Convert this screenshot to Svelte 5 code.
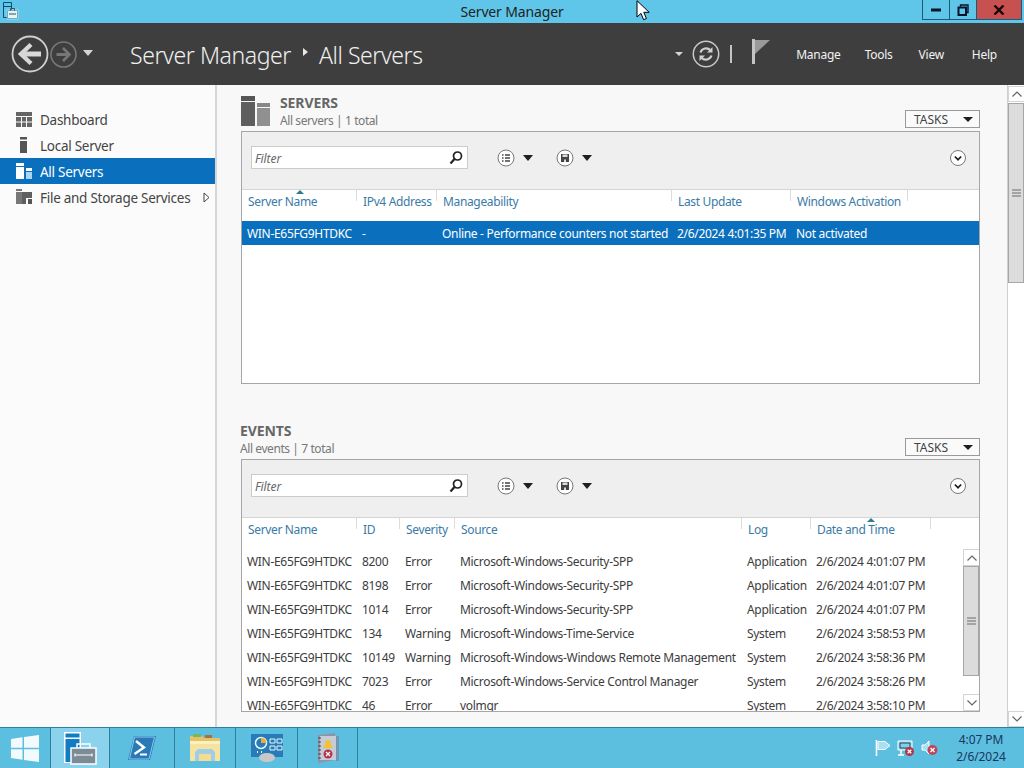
<script>
  const serverCols = [
    { label: 'Server Name', w: 114, sort: 54 },
    { label: 'IPv4 Address', w: 80 },
    { label: 'Manageability', w: 235 },
    { label: 'Last Update', w: 119 },
    { label: 'Windows Activation', w: 117 },
    { label: '', w: 72 }
  ];
  const serverRow = ['WIN-E65FG9HTDKC', '-', 'Online - Performance counters not started', '2/6/2024 4:01:35 PM', 'Not activated', ''];
  const eventCols = [
    { label: 'Server Name', w: 114 },
    { label: 'ID', w: 43 },
    { label: 'Severity', w: 55 },
    { label: 'Source', w: 287 },
    { label: 'Log', w: 69 },
    { label: 'Date and Time', w: 120, sort: 57 },
    { label: '', w: 49 }
  ];
  const events = [
    ['8200', 'Error', 'Microsoft-Windows-Security-SPP', 'Application', '2/6/2024 4:01:07 PM'],
    ['8198', 'Error', 'Microsoft-Windows-Security-SPP', 'Application', '2/6/2024 4:01:07 PM'],
    ['1014', 'Error', 'Microsoft-Windows-Security-SPP', 'Application', '2/6/2024 4:01:07 PM'],
    ['134', 'Warning', 'Microsoft-Windows-Time-Service', 'System', '2/6/2024 3:58:53 PM'],
    ['10149', 'Warning', 'Microsoft-Windows-Windows Remote Management', 'System', '2/6/2024 3:58:36 PM'],
    ['7023', 'Error', 'Microsoft-Windows-Service Control Manager', 'System', '2/6/2024 3:58:26 PM'],
    ['46', 'Error', 'volmgr', 'System', '2/6/2024 3:58:10 PM']
  ];
  const tmpl = (cols) => cols.map((c) => c.w + 'px').join(' ');
</script>

{#snippet headRow(cols)}
  <div class="thead" style="grid-template-columns:{tmpl(cols)}">
    {#each cols as c}
      <div class="th">
        {#if c.sort}<i class="sort" style="left:{c.sort}px"></i>{/if}
        {c.label}
      </div>
    {/each}
  </div>
{/snippet}

{#snippet toolbar()}
  <div class="toolbar">
    <div class="filter">
      <span>Filter</span>
      <svg width="16" height="16" viewBox="0 0 16 16"><circle cx="9.5" cy="6" r="4" fill="none" stroke="#222" stroke-width="1.7"/><path d="M6.500 9 2.500 13.500" stroke="#222" stroke-width="2.2"/></svg>
    </div>
    <div class="tool first">
      <svg width="18" height="18" viewBox="0 0 18 18"><circle cx="9" cy="9" r="8" fill="#fff" stroke="#777"/><path d="M5 6h1.500M5 9h1.500M5 12h1.500M8 6h5M8 9h5M8 12h5" stroke="#444" stroke-width="1.6"/></svg>
      <i class="tri"></i>
    </div>
    <div class="tool">
      <svg width="18" height="18" viewBox="0 0 18 18"><circle cx="9" cy="9" r="8" fill="#fff" stroke="#777"/><path d="M5 5h8v8H5z" fill="#444"/><path d="M6.500 5.500h5V8h-5z" fill="#ddd"/><path d="M8 10.500h2V13H8z" fill="#ddd"/></svg>
      <i class="tri"></i>
    </div>
    <svg class="expand" width="16" height="16" viewBox="0 0 16 16"><circle cx="8" cy="8" r="7.500" fill="#fff" stroke="#777"/><path d="M4.800 6.500 8 9.700l3.200-3.200" fill="none" stroke="#222" stroke-width="1.7"/></svg>
  </div>
{/snippet}

{#snippet tasks()}
  <div class="tasks"><span>TASKS</span><i class="tri small"></i></div>
{/snippet}

{#snippet chev(up)}
  <svg width="12" height="8" viewBox="0 0 12 8"><path d={up ? 'M1.500 6.500 6 2l4.500 4.500' : 'M1.500 1.500 6 6l4.500-4.500'} fill="none" stroke="#666" stroke-width="1.2"/></svg>
{/snippet}

{#snippet grip()}
  <svg width="9" height="8" viewBox="0 0 9 8"><path d="M0 1h9M0 4h9M0 7h9" stroke="#6a6a6a" stroke-width="1.2"/></svg>
{/snippet}

<div class="screen">
  <div class="titlebar">
    <div class="tb-left">
      <svg width="18" height="19" viewBox="0 0 18 19"><path d="M2.500 1.500h8v15h-8zM2.500 5.500h8" fill="#5ec7ea" stroke="#0c4d78" stroke-width="1"/><path d="M6.500 9.500h10v8h-10z" fill="#dff3fa" stroke="#fff" stroke-width="1.4"/><path d="M6.500 9.500h10v8h-10z" fill="none" stroke="#1a6d96" stroke-width=".6"/><path d="M9.500 9.500v-2h4v2M8 13h7" fill="none" stroke="#355" stroke-width="1"/></svg>
    </div>
    <div class="tb-title">Server Manager</div>
    <div class="winbtns">
      <div class="wb">
        <svg width="12" height="4" viewBox="0 0 12 4"><path d="M1 2h10" stroke="#06142a" stroke-width="3"/></svg>
      </div>
      <div class="wb">
        <svg width="12" height="12" viewBox="0 0 12 12"><path d="M3.500 2.800V1h7.500v7.500H9" fill="none" stroke="#06142a" stroke-width="1.4"/><path d="M1.500 3.500h7.500v7.500H1.500z" fill="none" stroke="#06142a" stroke-width="2"/></svg>
      </div>
      <div class="wb close">
        <svg width="12" height="10" viewBox="0 0 12 10"><path d="M1.500 .5 10.500 9.500M10.500 .5 1.500 9.500" stroke="#1c0808" stroke-width="2.4"/></svg>
      </div>
    </div>
  </div>

  <header class="header">
    <svg class="back" width="38" height="38" viewBox="0 0 38 38"><circle cx="19" cy="19" r="17.500" fill="none" stroke="#cfcfcf" stroke-width="1.8"/><path d="M30 19H13" stroke="#d8d8d8" stroke-width="5"/><path d="M20 9.500 10 19l10 9.500" fill="none" stroke="#d8d8d8" stroke-width="4.4"/></svg>
    <svg class="fwd" width="27" height="27" viewBox="0 0 27 27"><circle cx="13.500" cy="13.500" r="12.500" fill="none" stroke="#777" stroke-width="1.6"/><path d="M6.500 13.500H18" stroke="#777" stroke-width="3"/><path d="M13 7l6.500 6.500L13 20" fill="none" stroke="#777" stroke-width="2.6"/></svg>
    <i class="caret hist"></i>
    <div class="crumb">
      <span>Server Manager</span>
      <i class="crumb-sep"></i>
      <span>All Servers</span>
    </div>
    <div class="hdr-right">
      <i class="caret refresh-c"></i>
      <svg width="28" height="28" viewBox="0 0 28 28"><circle cx="14" cy="14" r="12.700" fill="none" stroke="#c8c8c8" stroke-width="1.5"/><path d="M8.500 12.500a6 6 0 0 1 10-2.300M19.500 15.500a6 6 0 0 1-10 2.300" fill="none" stroke="#d0d0d0" stroke-width="2.2"/><path d="M20.500 7v5.500H15zM7.500 21v-5.500H13z" fill="#d0d0d0"/></svg>
      <i class="vsep"></i>
      <svg class="flag" width="18" height="25" viewBox="0 0 18 25"><path d="M0 0h3v25H0z" fill="#c4c4c4"/><path d="M3 1h15L3 15z" fill="#9a9a9a"/></svg>
      <nav class="menu"><span class="m-manage">Manage</span><span>Tools</span><span>View</span><span class="m-help">Help</span></nav>
    </div>
  </header>

  <div class="body">
    <aside class="side">
      <div class="nav">
        <svg width="16" height="15" viewBox="0 0 16 15"><path d="M0 0h16v4H0zM0 5h5v4.500H0zM6 5h4v4.500H6zM11 5h5v4.500h-5zM0 10.500h5V15H0zM6 10.500h4V15H6zM11 10.500h5V15h-5z" fill="#666"/></svg>
        <span>Dashboard</span>
      </div>
      <div class="nav">
        <svg width="16" height="16" viewBox="0 0 16 16"><path d="M4 0h7v2.500H4zM4 4h7v12H4z" fill="#555"/></svg>
        <span>Local Server</span>
      </div>
      <div class="nav sel">
        <svg width="16" height="16" viewBox="0 0 16 16"><path d="M0 0h8v3H0zM0 4h8v12H0z" fill="#fff"/><path d="M10 5h6v3h-6z" fill="#fff"/><path d="M10 9h6v7h-6z" fill="#a9d6f5"/></svg>
        <span>All Servers</span>
      </div>
      <div class="nav">
        <svg width="16" height="16" viewBox="0 0 16 16"><path d="M0 0h6v2H0zM0 3h10v12H0z" fill="#777"/><path d="M6 3h10v12H6z" fill="#5f5f5f"/><path d="M10 9h6v6h-6z" fill="#fafafa"/><path d="M12 10h4v5h-4z" fill="#555"/></svg>
        <span>File and Storage Services</span>
        <svg class="more" width="7" height="11" viewBox="0 0 7 11"><path d="M1 1v9l5-4.500z" fill="#fff" stroke="#444"/></svg>
      </div>
    </aside>

    <main class="content">
      <section class="servers">
        <div class="sec-head">
          <svg width="30" height="30" viewBox="0 0 30 30"><path d="M0 0h14v5H0z" fill="#555"/><path d="M0 6h14v24H0z" fill="#5f5f5f"/><path d="M16 7h13v4H16z" fill="#888"/><path d="M16 12h13v18H16z" fill="#909090"/></svg>
          <div class="sec-titles">
            <h2>SERVERS</h2>
            <p>All servers | 1 total</p>
          </div>
          {@render tasks()}
        </div>
        <div class="panel">
          {@render toolbar()}
          {@render headRow(serverCols)}
          <div class="trow selrow" style="grid-template-columns:{tmpl(serverCols)}">
            {#each serverRow as cell}<div class="td">{cell}</div>{/each}
          </div>
        </div>
      </section>

      <section class="events">
        <div class="sec-head ev">
          <div class="sec-titles">
            <h2>EVENTS</h2>
            <p>All events | 7 total</p>
          </div>
          {@render tasks()}
        </div>
        <div class="panel">
          {@render toolbar()}
          {@render headRow(eventCols)}
          <div class="evbody">
            <div class="rows">
              {#each events as e}
                <div class="trow" style="grid-template-columns:{tmpl(eventCols)}">
                  <div class="td">WIN-E65FG9HTDKC</div>
                  {#each e as cell}<div class="td">{cell}</div>{/each}
                </div>
              {/each}
            </div>
            <div class="vbar inner">
              <div class="btn ib">{@render chev(true)}</div>
              <div class="thumb ithumb">{@render grip()}</div>
              <div class="track"></div>
              <div class="btn ib">{@render chev(false)}</div>
            </div>
          </div>
        </div>
      </section>
    </main>

    <div class="vbar outer">
      <div class="btn">{@render chev(true)}</div>
      <div class="thumb othumb">{@render grip()}</div>
      <div class="track"></div>
      <div class="btn">{@render chev(false)}</div>
    </div>
  </div>

  <footer class="taskbar">
    <div class="ti start">
      <svg width="28" height="27" viewBox="0 0 28 27"><path d="M0 4 11.500 2.300V12.700H0zM13 2 28 0V12.700H13zM0 14.300H11.500V24.700L0 23zM13 14.300H28V27L13 25z" fill="#fff" opacity=".92"/></svg>
    </div>
    <div class="ti active">
      <svg width="34" height="34" viewBox="0 0 34 34"><path d="M1 1h17v31H1z" fill="#fff"/><path d="M2.500 2.500h14v4h-14zM2.500 8h14v23h-14z" fill="#0f7cc4"/><path d="M8 17h25v16H8z" fill="#7c8c97" stroke="#fff" stroke-width="1.500"/><path d="M14 17v-4h13v4" fill="none" stroke="#fff" stroke-width="1.500"/><path d="M12 24h17M12 22.500v3M29 22.500v3" stroke="#fff" stroke-width="1.200"/></svg>
    </div>
    <div class="ti">
      <svg width="28" height="24" viewBox="0 0 28 24"><path d="M6 0h22l-6 24H0z" fill="#2a7ab8"/><path d="M6.500 1h20l-5.500 22H1.500z" fill="none" stroke="#8cc8ec"/><path d="M8 5l8 6.500L6.500 18" fill="none" stroke="#fff" stroke-width="2.400"/><path d="M12 18.500h7" stroke="#fff" stroke-width="2"/></svg>
    </div>
    <div class="ti">
      <svg width="32" height="32" viewBox="0 0 32 32"><path d="M1 4h12l2 2h16v18H1z" fill="#e6c266"/><path d="M4 2h8v3H4z" fill="#6fbb5c"/><path d="M16 3h7v3h-7z" fill="#a8703c"/><path d="M1 9h30v20H1z" fill="#f6e3a0"/><path d="M1 9h30v3H1z" fill="#fbf0c4"/><path d="M6 29v-9l3-3h14l3 3v9h-4v-7H10v7z" fill="#9fcfe6"/><path d="M10 22h12v7H10z" fill="#f5dc92"/></svg>
    </div>
    <div class="ti">
      <svg width="34" height="28" viewBox="0 0 34 28"><path d="M1 0h32v23H1z" fill="#2a7ab8"/><circle cx="11" cy="9" r="5.500" fill="none" stroke="#dff" stroke-width="1.500"/><path d="M11 3.500a5.500 5.500 0 0 1 5.500 5.500H11z" fill="#f2a93b"/><path d="M20 5h5v4h-5zM27 5h5v4h-5zM20 12h5v4h-5zM27 12h5v4h-5z" fill="none" stroke="#dff"/><path d="M7 18h1M11 18h1" stroke="#dff" stroke-width="2"/><ellipse cx="17" cy="23.500" rx="8" ry="4.500" fill="#c8c8c8"/></svg>
    </div>
    <div class="ti">
      <svg width="24" height="31" viewBox="0 0 24 31"><path d="M2 2l17-2v27l-17 3z" fill="#8d95a8"/><path d="M4 3h16v24H4z" fill="#c7cbd8"/><path d="M20 3h3v25h-3z" fill="#7a7f90" opacity=".6"/><path d="M2 5h3M2 9h3M2 13h3M2 17h3M2 21h3M2 25h3" stroke="#444" stroke-width="1.200"/><path d="M12 6l5 9H7z" fill="#f1c232"/><path d="M9 8h6v2H9z" fill="#f1c232"/><circle cx="12" cy="21" r="4.500" fill="#b5344a"/><path d="M10 19l4 4M14 19l-4 4" stroke="#fff" stroke-width="1.200"/></svg>
    </div>
    <div class="tray">
      <svg width="16" height="16" viewBox="0 0 16 16"><path d="M1.500 0v16" stroke="#fff" stroke-width="1.600"/><path d="M3 1.500h7l5 4-5 4H3z" fill="#a8dff2" stroke="#fff"/></svg>
      <svg width="18" height="16" viewBox="0 0 18 16"><path d="M1 1h14v9H1z" fill="#7fd0ec" stroke="#fff"/><path d="M3 3h10v5H3z" fill="none" stroke="#345"/><path d="M4 10v5M1 15h6" stroke="#fff" stroke-width="1.500"/><circle cx="12.500" cy="11.500" r="4.500" fill="#b5344a"/><path d="M10.700 9.700l3.600 3.600M14.300 9.700l-3.600 3.600" stroke="#fff" stroke-width="1.300"/></svg>
      <svg width="17" height="16" viewBox="0 0 17 16"><path d="M1 5h3l4-4v13L4 10H1z" fill="#a8dff2" stroke="#fff"/><circle cx="11.500" cy="10" r="5" fill="#c0455a"/><path d="M9.500 8l4 4M13.500 8l-4 4" stroke="#fff" stroke-width="1.300"/></svg>
      <div class="clock"><span>4:07 PM</span><span>2/6/2024</span></div>
    </div>
  </footer>

  <svg class="cursor" width="14" height="22" viewBox="0 0 14 22"><path d="M1 .7V17l4-3.600 2.600 6.300 2.800-1.200-2.600-6.200h5.400z" fill="#fff" stroke="#000" stroke-width="1"/></svg>
</div>

<style>
  :global(body) { margin: 0; background: #f8f8f8; }
  .screen {
    position: relative;
    width: 1024px;
    height: 768px;
    overflow: hidden;
    display: flex;
    flex-direction: column;
    font-family: "Noto Sans", "Open Sans", sans-serif;
    font-size: 12px;
    color: #333;
    background: #f8f8f8;
  }
  i { display: block; }

  .titlebar {
    height: 23px;
    flex: none;
    background: #5fc6e9;
    display: grid;
    grid-template-columns: 1fr auto 1fr;
  }
  .tb-left { padding: 1px 0 0 1px; }
  .tb-title { font-size: 14px; line-height: 24px; color: #222; letter-spacing: -.15px; }
  .winbtns { display: flex; justify-self: end; height: 19px; margin-right: 2px; border: 1px solid #1c5a78; border-top: 0; }
  .wb { width: 27px; box-sizing: border-box; display: flex; align-items: center; justify-content: center; border-right: 1px solid #1c5a78; }
  .close { width: 44px; background: #c75050; border-right: 0; }

  .header {
    height: 62px;
    flex: none;
    background: #3e3e3e;
    display: flex;
    align-items: center;
    padding-left: 11px;
  }
  .fwd { margin-left: 1px; }
  .caret { width: 0; height: 0; border-left: 5px solid transparent; border-right: 5px solid transparent; border-top: 6px solid #d4d4d4; }
  .hist { margin: 0 0 3px 6px; }
  .crumb { display: flex; align-items: center; margin-left: 37px; font-size: 23px; font-weight: 300; color: #f0f0f0; letter-spacing: -.42px; margin-top: 2px; }
  .crumb-sep { width: 0; height: 0; margin: 0 11px 0 12px; border-top: 4px solid transparent; border-bottom: 4px solid transparent; border-left: 5px solid #e8e8e8; transform: translateY(-3px); }
  .hdr-right { margin-left: auto; display: flex; align-items: center; }
  .refresh-c { border-width: 4px 4px 0; margin-right: 9px; }
  .vsep { width: 2px; height: 18px; background: #c4c4c4; margin: 0 20px 0 10px; }
  .flag { margin-bottom: 5px; }
  .menu { display: flex; gap: 26px; padding: 0 27px 0 26px; font-size: 12px; color: #f2f2f2; letter-spacing: -.25px; margin-top: 1px; }
  .m-manage { margin-right: -2px; }
  .m-help { margin-left: 2px; }

  .body { flex: 1; min-height: 0; display: flex; }
  .side { width: 215px; flex: none; padding-top: 21px; box-sizing: content-box; border-right: 2px solid #d6d6d6; background: #fbfbfb; }
  .nav { height: 26px; display: flex; align-items: center; gap: 8px; padding: 0 5px 0 16px; font-size: 13.5px; color: #444; letter-spacing: -.27px; white-space: nowrap; }
  .nav span { padding-top: 2px; }
  .nav.sel { background: #0a70bd; color: #fff; }
  .more { margin-left: auto; }

  .content { flex: 1; min-width: 0; padding: 11px 27px 0 24px; }
  .sec-head { display: flex; align-items: flex-start; height: 35px; }
  .sec-head.ev { margin-left: -1px; }
  .sec-titles { margin-left: 9px; flex: 1; }
  .ev .sec-titles { margin-left: 0; }
  h2 { margin: 0; font-size: 14px; line-height: 14px; font-weight: 700; color: #666; letter-spacing: -.1px; }
  p { margin: 3px 0 0; font-size: 12px; line-height: 16px; color: #777; letter-spacing: -.42px; }
  .tasks { height: 16px; margin-top: 14px; border: 1px solid #999; background: #fafafa; display: flex; align-items: center; justify-content: space-between; padding: 0 6px 0 8px; box-sizing: content-box; width: 59px; font-size: 12px; color: #444; }
  .tri { width: 0; height: 0; border-left: 5.500px solid transparent; border-right: 5.500px solid transparent; border-top: 6px solid #1f1f1f; }
  .tri.small { border-left-width: 5px; border-right-width: 5px; border-top-width: 5px; }

  .panel { height: 251px; border: 1px solid #a6a6a6; background: #fff; display: flex; flex-direction: column; overflow: hidden; }
  .events { margin-top: 40px; }
  .toolbar { height: 58px; box-sizing: border-box; flex: none; background: #efefef; border-bottom: 1px solid #d4d4d4; display: flex; align-items: center; padding: 0 13px 6px 9px; }
  .filter { height: 21px; border: 1px solid #ccc; background: #fff; display: flex; align-items: center; justify-content: space-between; padding: 0 3px; box-sizing: content-box; width: 209px; font-style: italic; color: #666; letter-spacing: -.1px; }
  .filter span { padding-top: 2px; }
  .tool { display: flex; align-items: center; gap: 8px; margin-left: 23px; }
  .tool.first { margin-left: 29px; }
  .expand { margin-left: auto; }

  .thead { display: grid; height: 31px; flex: none; }
  .th { position: relative; padding: 4px 0 0 6px; line-height: 16px; color: #3a7ba6; letter-spacing: -.35px; white-space: nowrap; }
  .th + .th { padding-left: 7px; }
  .th + .th::before { content: ""; position: absolute; left: 0; top: 0; width: 1px; height: 11px; background: #dcdcdc; }
  .sort { position: absolute; top: 0; width: 0; height: 0; border-left: 4px solid transparent; border-right: 4px solid transparent; border-bottom: 4px solid #2e7d8f; }

  .trow { display: grid; height: 24px; align-items: start; }
  .td { padding: 1px 0 0 5px; white-space: nowrap; line-height: 23px; letter-spacing: -.31px; color: #3c3c3c; }
  .td + .td { padding-left: 6px; }
  .selrow { background: #0a70bd; }
  .selrow .td { color: #fff; }

  .evbody { flex: 1; min-height: 0; display: flex; }
  .rows { width: 721px; overflow: hidden; }
  .vbar { display: flex; flex-direction: column; background: #fff; }
  .inner { width: 16px; }
  .outer { width: 16px; flex: none; border-left: 1px solid #cfcfcf; padding-top: 1px; }
  .btn { height: 16px; flex: none; display: flex; align-items: center; justify-content: center; border: 1px solid #d4d4d4; border-width: 1px 0 1px 1px; box-sizing: border-box; }
  .btn.ib { height: 17px; }
  .thumb { background: #dcdcdc; border: 1px solid #a6a6a6; flex: none; display: flex; align-items: center; justify-content: center; box-sizing: border-box; }
  .ithumb { height: 110px; }
  .othumb { height: 180px; margin-top: 1px; }
  .track { flex: 1; }

  .taskbar { height: 41px; flex: none; box-sizing: border-box; border-top: 1px solid #2f7f9f; background: #5dbfe0; display: flex; }
  .ti { height: 100%; display: flex; align-items: center; justify-content: center; border-right: 1px solid #2f7f9f; box-sizing: border-box; width: 61px; }
  .ti.start { width: 51px; }
  .ti.active { width: 59px; background: #8bd3ec; }
  .ti:nth-child(3) { width: 65px; }
  .ti:nth-child(5) { width: 62px; }
  .ti:nth-child(6) { width: 60px; }
  .tray { margin-left: auto; display: flex; align-items: center; gap: 6px; }
  .clock { width: 86px; margin-left: -6px; display: flex; flex-direction: column; align-items: center; font-size: 12px; line-height: 17px; color: #18375c; letter-spacing: -.1px; }

  .cursor { position: absolute; left: 636px; top: 0; }
</style>
